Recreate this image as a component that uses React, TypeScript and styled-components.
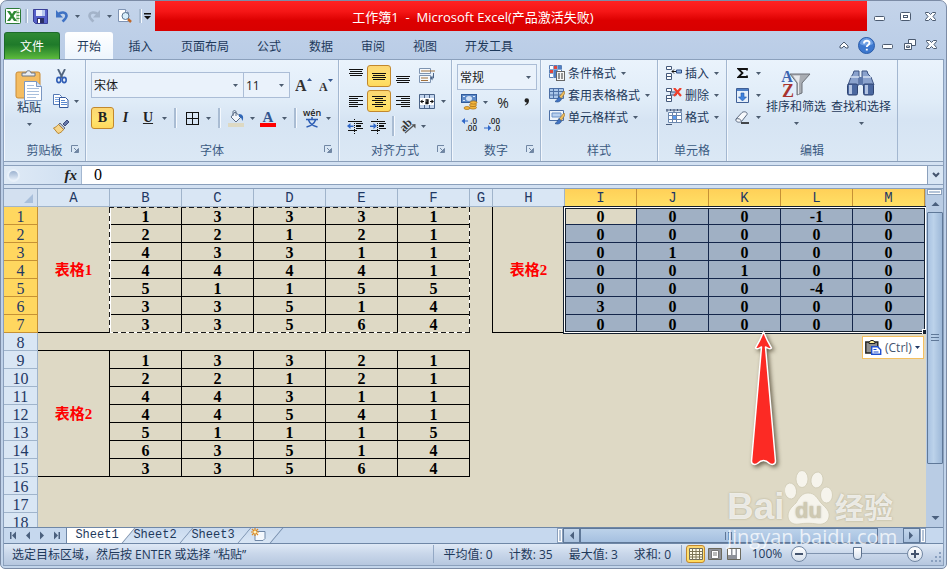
import React from "react";
import styled, { createGlobalStyle, css } from "styled-components";

const GlobalStyle = createGlobalStyle`
  * { box-sizing: border-box; }
  body {
    margin: 0;
    background: #ffffff;
    font-family: "Open Sans", "Noto Sans CJK SC", sans-serif;
    font-size: 12px;
    color: #1e395b;
  }
  button, input, select { font: inherit; color: inherit; margin: 0; }
`;

/* ---------- window frame ---------- */

const Window = styled.div`
  position: relative;
  display: flex;
  flex-direction: column;
  height: 100vh;
  padding: 0 2px 2px;
  border: 1px solid #7c8ca6;
  border-radius: 7px 7px 5px 5px;
  background: linear-gradient(#c4d4ea, #b9cce6 60px, #c3d5eb);
  overflow: hidden;
`;

const TitleBar = styled.header`
  display: flex;
  height: 30px;
  flex: none;
`;

const QuickAccess = styled.div`
  display: flex;
  align-items: center;
  width: 152px;
  padding: 0 0 0 1px;
`;

const Banner = styled.h1`
  flex: 1;
  margin: 0;
  padding-right: 76px;
  display: flex;
  align-items: center;
  justify-content: center;
  background: linear-gradient(#ff2222, #f51616 35%, #dc0000 65%, #d80000);
  color: #ffffff;
  font-size: 13px;
  font-weight: 400;
  white-space: pre;
`;

const WindowButtons = styled.div`
  display: flex;
  align-items: center;
  justify-content: space-between;
  width: 77px;
  padding: 2px 6px 0 6px;
`;

const IconButton = styled.button<{ $w?: number; $h?: number; $on?: boolean }>`
  display: inline-flex;
  align-items: center;
  justify-content: center;
  flex: none;
  width: ${(p) => p.$w ?? 22}px;
  height: ${(p) => p.$h ?? 22}px;
  padding: 0;
  border: 1px solid ${(p) => (p.$on ? "#c2882d" : "transparent")};
  border-radius: 3px;
  background: ${(p) => (p.$on ? "linear-gradient(#fcd673, #ffe36f 60%, #ffd95c)" : "none")};
`;

const TabRow = styled.nav`
  display: flex;
  align-items: flex-end;
  flex: none;
  height: 28px;
  padding: 0 3px 0 1px;
`;

const FileTab = styled.button`
  width: 56px;
  height: 27px;
  margin-right: 5px;
  padding: 0;
  border: 1px solid #1c6b2a;
  border-bottom: 0;
  border-radius: 3px 3px 0 0;
  background: linear-gradient(#2f8a34, #1f7a2a 45%, #3f9c34 75%, #5dbb3c);
  color: #ffffff;
`;

const RibbonTab = styled.button<{ $active?: boolean; $w: number }>`
  width: ${(p) => p.$w}px;
  height: 27px;
  padding: 0;
  border: 0;
  border-radius: 3px 3px 0 0;
  background: ${(p) => (p.$active ? "linear-gradient(#ffffff, #edf5fd)" : "none")};
`;

const TabTools = styled.div`
  display: flex;
  align-items: center;
  gap: 3px;
  height: 28px;
  margin-left: auto;
`;

const Body = styled.main`
  display: flex;
  flex-direction: column;
  flex: 1;
  min-height: 0;
  border: 1px solid #8ba0bc;
  background: #d3e1f2;
`;

/* ---------- ribbon ---------- */

const Ribbon = styled.section`
  display: flex;
  flex: none;
  border-bottom: 1px solid #8b9fb9;
  background: linear-gradient(#eaf3fc, #e0ecf8 40%, #d6e4f3 60%, #dbe8f5);
`;

const GroupBox = styled.section<{ $w: number }>`
  display: flex;
  flex-direction: column;
  flex: none;
  width: ${(p) => p.$w}px;
  border-right: 1px solid #a3b7d0;
  box-shadow: inset 1px 0 0 #f2f7fd;
`;

const GroupBody = styled.div<{ $top: number; $left?: number }>`
  display: flex;
  height: 79px;
  padding: ${(p) => p.$top}px 0 0 ${(p) => p.$left ?? 5}px;
`;

const GroupFooter = styled.footer`
  display: flex;
  align-items: center;
  height: 22px;
  padding: 0 4px 0 14px;
  color: #3b5a82;
  span { flex: 1; text-align: center; }
`;

const Launcher = styled.button`
  width: 10px;
  height: 10px;
  padding: 0;
  border: 0;
  background: none;
  display: flex;
`;

const Stack = styled.div<{ $gap?: number }>`
  display: flex;
  flex-direction: column;
  gap: ${(p) => p.$gap ?? 0}px;
`;

const ToolRow = styled.div`
  display: flex;
  align-items: center;
`;

const ArrowButton = styled.button<{ $w?: number }>`
  display: inline-flex;
  align-items: center;
  justify-content: center;
  flex: none;
  width: ${(p) => p.$w ?? 10}px;
  height: 16px;
  padding: 0;
  border: 0;
  background: none;
`;

const Separator = styled.span<{ $w?: number; $h?: number }>`
  display: flex;
  justify-content: center;
  flex: none;
  width: ${(p) => p.$w ?? 12}px;
  height: ${(p) => p.$h ?? 20}px;
  &::before {
    content: "";
    width: 2px;
    background: #a9bcd3;
    border-right: 1px solid #f5f9fe;
  }
`;

const BigButton = styled.button<{ $w: number }>`
  display: flex;
  flex-direction: column;
  align-items: center;
  width: ${(p) => p.$w}px;
  padding: 0;
  border: 0;
  background: none;
  white-space: nowrap;
  line-height: 18px;
  svg:last-child { margin-top: 6px; }
`;

const Picture = styled.span<{ $h: number }>`
  display: flex;
  align-items: center;
  height: ${(p) => p.$h}px;
`;

const LabelButton = styled.button`
  display: flex;
  align-items: center;
  height: 22px;
  padding: 0;
  border: 0;
  background: none;
  white-space: nowrap;
  span { margin: 0 5px 0 3px; }
`;

const ComboBox = styled.label<{ $w: number }>`
  display: flex;
  align-items: center;
  width: ${(p) => p.$w}px;
  height: 26px;
  padding-right: 5px;
  border: 1px solid #abbdd6;
  background: #eaf2fb;
  & + & { border-left: 0; }
  select {
    flex: 1;
    min-width: 0;
    height: 22px;
    padding: 0 2px;
    border: 0;
    background: none;
    appearance: none;
    color: #1c1c1c;
  }
`;

const Letter = styled.span<{ $size: number; $italic?: boolean; $underline?: boolean }>`
  font: bold ${(p) => p.$size}px "Liberation Serif", serif;
  font-style: ${(p) => (p.$italic ? "italic" : "normal")};
  text-decoration: ${(p) => (p.$underline ? "underline" : "none")};
  color: #222222;
`;

const Percent = styled.span`
  font-size: 14px;
  color: #222222;
`;

/* ---------- formula bar ---------- */

const FormulaBar = styled.div`
  display: flex;
  flex: none;
  height: 20px;
  margin-top: 3px;
  border: solid #8ba0bc;
  border-width: 1px 0;
  background: #ffffff;
`;

const NameArea = styled.div`
  display: flex;
  align-items: center;
  justify-content: space-between;
  width: 78px;
  padding: 0 4px 0 3px;
  border-right: 1px solid #a3b7d0;
  background: linear-gradient(90deg, #dfeaf6, #cfdff1);
`;

const Knob = styled.span`
  width: 13px;
  height: 13px;
  border-radius: 50%;
  border: 2px solid #e8f0f9;
  background: linear-gradient(#9db3d0, #e4edf8);
`;

const FormulaInput = styled.input`
  flex: 1;
  min-width: 0;
  padding: 0 12px;
  border: 0;
  background: #ffffff;
  color: #000000;
  && { font: 16px "Liberation Serif", serif; }
`;

const ExpandButton = styled.button`
  width: 16px;
  padding: 0;
  border: 0;
  border-left: 1px solid #8ba0bc;
  background: #d9e6f4;
  display: flex;
  align-items: center;
  justify-content: center;
`;

/* ---------- worksheet ---------- */

const Workspace = styled.div`
  display: flex;
  flex: 1;
  min-height: 0;
  margin-top: 3px;
  border-top: 1px solid #8ba0bc;
`;

const Sheet = styled.div`
  position: relative;
  flex: 1;
  min-width: 0;
  overflow: hidden;
  background: #ded9c5;
`;

const Grid = styled.table`
  width: 100%;
  table-layout: fixed;
  border-collapse: separate;
  border-spacing: 0;
`;

const Col = styled.col<{ $w?: number }>`
  width: ${(p) => (p.$w ? `${p.$w}px` : "auto")};
`;

const heading = css<{ $hot?: boolean }>`
  height: 18px;
  padding: 2px 0 0;
  border: solid ${(p) => (p.$hot ? "#c69135" : "#a0b4cb")};
  border-width: 0 1px 1px 0;
  color: #1f3864;
  font-weight: 400;
  line-height: 15px;
`;

const ColumnHead = styled.th<{ $hot?: boolean }>`
  ${heading}
  font-family: "Liberation Mono", monospace;
  font-size: 14px;
  background: ${(p) => (p.$hot ? "linear-gradient(#ffd058, #ffe066)" : "#d9e6f4")};
`;

const RowHead = styled.th<{ $hot?: boolean }>`
  ${heading}
  font-family: "Liberation Serif", serif;
  font-size: 16px;
  background: ${(p) => (p.$hot ? "#ffd75f" : "#d9e6f4")};
`;

const Corner = styled.th`
  ${heading}
  background: #d3e0f0;
  svg { display: block; margin-left: auto; margin-right: 4px; }
`;

type CellLook = { $right?: boolean; $bottom?: boolean; $picked?: boolean; $blue?: boolean };

const Cell = styled.td<CellLook>`
  height: 18px;
  padding: 2px 0 0;
  border: 0 solid ${(p) => (p.$blue ? "#14264a" : "#000000")};
  border-right-width: ${(p) => (p.$right ? 1 : 0)}px;
  border-bottom-width: ${(p) => (p.$bottom ? 1 : 0)}px;
  background: ${(p) => (p.$picked ? "#a0b0c4" : "transparent")};
  color: #000000;
  font: bold 16px/15px "Liberation Serif", serif;
  text-align: center;
`;

const TitleCell = styled(Cell)`
  color: #ff0000;
  font: bold 15px/17px "Liberation Serif", "Noto Sans CJK SC", serif;
`;

const CopyMarquee = styled.svg`
  position: absolute;
  left: 105px;
  top: 17px;
  width: 362px;
  height: 128px;
`;

const SelectionFrame = styled.div`
  position: absolute;
  left: 559px;
  top: 17px;
  width: 364px;
  height: 128px;
  border: 1px solid #14202f;
  &::before {
    content: "";
    position: absolute;
    inset: 0;
    border: 1px solid #ffffff;
  }
  &::after {
    content: "";
    position: absolute;
    inset: 1px;
    border: 1px solid #14202f;
  }
`;

const FillHandle = styled.span`
  position: absolute;
  right: -1px;
  bottom: -1px;
  z-index: 1;
  width: 5px;
  height: 5px;
  border: solid #ffffff;
  border-width: 1px 0 0 1px;
  background: #14202f;
`;

const Pointer = styled.svg`
  position: absolute;
  left: 742px;
  top: 139px;
  filter: drop-shadow(2px 2px 2px rgba(60, 50, 30, 0.7));
`;

const PasteOptions = styled.button`
  position: absolute;
  left: 858px;
  top: 147px;
  display: flex;
  align-items: center;
  gap: 3px;
  width: 62px;
  height: 23px;
  padding: 0 2px;
  border: 1px solid #f5c060;
  background: #ffffff;
  color: #44546e;
`;

/* ---------- scroll bars ---------- */

const VScroll = styled.div`
  display: flex;
  flex-direction: column;
  flex: none;
  width: 17px;
  padding-left: 1px;
  background: #b9cce4;
`;

const SplitBox = styled.span<{ $vertical?: boolean }>`
  flex: none;
  width: ${(p) => (p.$vertical ? 6 : 15)}px;
  height: ${(p) => (p.$vertical ? 15 : 6)}px;
  border: 1px solid #8ba0bc;
  background: #f3f8fd;
  box-shadow: inset 0 0 0 1px #ffffff, inset 0 0 0 2px #b4c4d8;
`;

const ScrollArrow = styled.button<{ $w?: number; $h?: number; $boxed?: boolean }>`
  display: flex;
  align-items: center;
  justify-content: center;
  flex: none;
  width: ${(p) => p.$w ?? 16}px;
  height: ${(p) => p.$h ?? 16}px;
  padding: 0;
  border: ${(p) => (p.$boxed ? "1px solid #5f7898" : "0")};
  background: ${(p) => (p.$boxed ? "linear-gradient(#c3d6ec, #a9c1de)" : "none")};
`;

const VThumb = styled.span`
  display: flex;
  align-items: center;
  justify-content: center;
  flex: 252 1 0;
  border: 1px solid #5f7898;
  border-radius: 1px;
  background: linear-gradient(90deg, #a9c3e2, #bcd2ea 40%, #9db8d8);
`;

const VTrack = styled.span`
  flex: 46 1 0;
`;

/* ---------- sheet tabs ---------- */

const BottomRow = styled.div`
  display: flex;
  flex: none;
  height: 17px;
  border: solid #6f87a6;
  border-width: 1px 0;
  background: #c6d8ee;
`;

const SheetNav = styled.div`
  position: relative;
  z-index: 2;
  display: flex;
  align-items: center;
  justify-content: space-around;
  width: 63px;
  padding: 0 2px;
  border-right: 1px solid #6f87a6;
  background: #c6d8ee;
`;

const NavButton = styled.button`
  display: flex;
  padding: 0;
  border: 0;
  background: none;
`;

const SheetTab = styled.button<{ $active?: boolean; $w: number }>`
  position: relative;
  z-index: ${(p) => (p.$active ? 1 : 0)};
  width: ${(p) => p.$w}px;
  padding: 0 ${(p) => (p.$active ? 2 : 6)}px 0 0;
  border: 0;
  background: none;
  && { font: 12px/15px "Liberation Mono", monospace; }
  &::before {
    content: "";
    position: absolute;
    z-index: -1;
    top: 0;
    bottom: 0;
    right: 0;
    left: ${(p) => (p.$active ? -10 : 0)}px;
    border-right: 1px solid #6f87a6;
    background: ${(p) => (p.$active ? "#ffffff" : "linear-gradient(#c9daef, #d9e6f5)")};
    transform: skewX(-40deg);
  }
`;

const HScroll = styled.div`
  display: flex;
  flex: none;
  width: 369px;
  margin-left: auto;
`;

const HThumb = styled.span`
  display: flex;
  align-items: center;
  justify-content: center;
  flex: 298 1 0;
  border: 1px solid #5f7898;
  background: linear-gradient(#bcd2ea, #a5c0e0);
`;

const HTrack = styled.span`
  flex: 25 1 0;
  background: #b4c8e2;
`;

const SizeCorner = styled.span`
  flex: none;
  width: 17px;
`;

/* ---------- status bar ---------- */

const StatusBar = styled.footer`
  display: flex;
  align-items: center;
  flex: none;
  height: 21px;
  padding: 0 1px 2px 8px;
  background: linear-gradient(#dfe9f6, #c9d7ea 45%, #b6c7df);
  white-space: pre;
`;

const Stats = styled.div`
  display: flex;
  gap: 16px;
  margin: 0 4px 0 auto;
  padding: 0 10px;
  border: solid #93a8c4;
  border-width: 0 1px;
`;

const RoundButton = styled.button`
  display: flex;
  align-items: center;
  justify-content: center;
  flex: none;
  width: 16px;
  height: 16px;
  padding: 0;
  border: 1px solid #7287a3;
  border-radius: 50%;
  background: linear-gradient(#ffffff, #d5dfec);
`;

const ZoomText = styled.button`
  width: 48px;
  padding: 0;
  border: 0;
  background: none;
`;

const ZoomSlider = styled.input`
  width: 100px;
  height: 15px;
  appearance: none;
  background: linear-gradient(#7f93ae, #7f93ae) center / 100% 1px no-repeat;
  &::-webkit-slider-thumb {
    appearance: none;
    width: 9px;
    height: 13px;
    background: linear-gradient(#ffffff, #d8e2ef);
    border: 1px solid #5d728e;
    border-radius: 1px 1px 5px 5px;
  }
`;

const Grip = styled.svg`
  flex: none;
  align-self: flex-end;
  margin-left: 8px;
`;

/* ---------- watermark ---------- */

const Watermark = styled.div`
  position: absolute;
  right: 50px;
  bottom: 19px;
  width: 169px;
  color: rgba(255, 255, 255, 0.75);
  pointer-events: none;
`;

const WatermarkLogo = styled.div`
  display: flex;
  align-items: flex-end;
  height: 56px;
  font-weight: 700;
  text-shadow: 0 0 2px rgba(150, 145, 120, 0.7);
`;

const Bai = styled.span`
  width: 58px;
  font: bold 37px/36px "Liberation Sans", sans-serif;
`;

const JingYan = styled.span`
  font-size: 29px;
  line-height: 34px;
`;

const WatermarkUrl = styled.div`
  font-size: 20px;
  line-height: 24px;
`;

/* ---------- icons ---------- */

const Down = ({ color = "#4c5c70" }: { color?: string }) => (
  <svg width="5" height="3" viewBox="0 0 5 3"><path d="M0 0h5L2.5 3z" fill={color} /></svg>
);

const Lines = ({ rows, h = 14 }: { rows: [number, number][]; h?: number }) => (
  <svg width="14" height={h} viewBox={`0 0 14 ${h}`} shapeRendering="crispEdges">
    {rows.map(([x, w], i) => (
      <rect key={i} x={x} y={i * 2} width={w} height="1" fill="#111" />
    ))}
  </svg>
);

const AlignV = ({ y }: { y: number }) => (
  <svg width="14" height="20" viewBox="0 0 14 20" shapeRendering="crispEdges">
    <path d={`M0 ${y}h14v1H0zM1 ${y + 2}h12v1H1zM0 ${y + 4}h14v1H0zM1 ${y + 6}h12v1H1z`} fill="#111" />
  </svg>
);

const ExcelLogo = () => (
  <svg width="16" height="16" viewBox="0 0 16 16">
    <rect x=".5" y=".5" width="15" height="15" rx="1" fill="#fff" stroke="#2c7a38" />
    <path d="M11 2h3v12h-3z" fill="#cfe6c8" />
    <path d="M11.5 4.5h3M11.5 7.5h3M11.5 10.5h3" stroke="#4c9a4c" />
    <path d="M2 3h3l2 3 2-3h3L8.500 8l3.500 5H9L7 10l-2 3H2l3.500-5z" fill="#2f8a34" />
  </svg>
);

const SaveIcon = () => (
  <svg width="15" height="15" viewBox="0 0 15 15">
    <path d="M.5.5h14v14h-12l-2-2z" fill="#5560c8" stroke="#3a3f98" />
    <rect x="3" y="1" width="9" height="6" fill="#e9eefb" />
    <path d="M9 1h3v6H9z" fill="#b7c8ee" />
    <rect x="4" y="9" width="7" height="5" fill="#2b2f66" />
    <rect x="5" y="10" width="2" height="4" fill="#fff" />
  </svg>
);

const UndoIcon = ({ redo }: { redo?: boolean }) => (
  <svg width="14" height="13" viewBox="0 0 14 13">
    <g transform={redo ? "translate(14 0) scale(-1 1)" : undefined}>
      <path d="M3 4.500C6 1.500 11 2 11.500 5.500c.3 2.500-2 4-4 6" fill="none" stroke={redo ? "#a3b3c9" : "#3f72c4"} strokeWidth="2.600" />
      <path d="M1 0l0 7.500h7z" fill={redo ? "#a3b3c9" : "#3f72c4"} />
    </g>
  </svg>
);

const PreviewIcon = () => (
  <svg width="16" height="16" viewBox="0 0 16 16">
    <path d="M1.500 1.500h7l3 3v9h-10z" fill="#fff" stroke="#7f94b4" />
    <path d="M8.500 1.500v3h3" fill="#d6e2f2" stroke="#7f94b4" />
    <circle cx="8.500" cy="8" r="3.500" fill="#d8eefb" stroke="#5b7590" />
    <path d="M11 11l3 3" stroke="#c06a2c" strokeWidth="2.500" />
  </svg>
);

const CustomizeIcon = () => (
  <svg width="7" height="7" viewBox="0 0 7 7"><path d="M0 0h7v1.500H0zM0 3h7L3.500 6.500z" fill="#111" /></svg>
);

const stroke = { fill: "#fdfeff", stroke: "#4b5a70", strokeWidth: 1 };
const MinIcon = () => (
  <svg width="12" height="12" viewBox="0 0 12 12"><rect x=".5" y="5.500" width="10" height="4" rx="1" {...stroke} /></svg>
);
const MaxIcon = () => (
  <svg width="12" height="12" viewBox="0 0 12 12">
    <rect x=".5" y="1.500" width="10" height="8" rx="1" {...stroke} />
    <rect x="3.500" y="4.500" width="4" height="2" {...stroke} />
  </svg>
);
const RestoreIcon = () => (
  <svg width="13" height="12" viewBox="0 0 13 12">
    <path d="M4.500.5h7v6h-7z" {...stroke} />
    <path d="M.5 4.500h7v6h-7z" {...stroke} />
    <path d="M2.500 7h3v1.500h-3z" {...stroke} />
  </svg>
);
const CloseIcon = () => (
  <svg width="12" height="12" viewBox="0 0 12 12">
    <path d="M.5 1.500h3l2 2 2-2h3v1L8 5.500l2.500 3v1h-3l-2-2-2 2h-3v-1L3 5.500l-2.500-3z" {...stroke} />
  </svg>
);
const CollapseIcon = () => (
  <svg width="10" height="9" viewBox="0 0 10 9">
    <path d="M5 1L9 5v2H7L5 5 3 7H1V5z" {...stroke} />
  </svg>
);
const HelpIcon = () => (
  <svg width="17" height="17" viewBox="0 0 17 17">
    <circle cx="8.500" cy="8.500" r="8" fill="#3d78cf" stroke="#2b5ca8" />
    <path d="M2 7a6.500 6 0 0 1 13 0c-4 2-9 2-13 0z" fill="#6fa0e4" />
    <path d="M6 6.500c0-3.500 5.500-3.500 5.500-.5 0 2-2.700 2-2.700 4M8.800 11.800v1.800" fill="none" stroke="#fff" strokeWidth="1.900" />
  </svg>
);

const PasteIcon = () => (
  <svg width="28" height="31" viewBox="0 0 28 31">
    <rect x="1" y="2" width="24" height="26" rx="2" fill="#f4bd62" stroke="#c98b36" />
    <path d="M7 6V3h4c0-3 5-3 5 0h4v3z" fill="#e8ecf2" stroke="#6c7684" />
    <path d="M9.500 11.500h12l5 5v14h-17z" fill="#fff" stroke="#7b97c2" />
    <path d="M21.500 11.500v5h5" fill="#d5e2f4" stroke="#7b97c2" />
    <path d="M12 15.500h7M12 18.500h12M12 21.500h12M12 24.500h12M12 27.500h9" stroke="#a9bfdc" />
  </svg>
);
const CutIcon = () => (
  <svg width="11" height="15" viewBox="0 0 11 15">
    <path d="M2 0l4.500 9M9 0L4.500 9" stroke="#51657f" strokeWidth="1.800" />
    <ellipse cx="2.800" cy="11" rx="2" ry="2.600" fill="none" stroke="#2f5db5" strokeWidth="1.600" />
    <ellipse cx="8.200" cy="11" rx="2" ry="2.600" fill="none" stroke="#2f5db5" strokeWidth="1.600" />
  </svg>
);
const CopyIcon = () => (
  <svg width="16" height="14" viewBox="0 0 16 14">
    <path d="M.5.5h6l2 2v8h-8z" fill="#fff" stroke="#5378b5" />
    <path d="M2 3.500h4M2 5.500h4M2 7.500h4" stroke="#7da3dc" />
    <path d="M6.500 3.500h6l2.500 2.500v7.500H6.500z" fill="#fff" stroke="#33589c" />
    <path d="M8 6.500h4M8 8.500h6M8 10.500h6" stroke="#5c8ad0" />
  </svg>
);
const BrushIcon = () => (
  <svg width="17" height="15" viewBox="0 0 17 15">
    <path d="M10 5l4-4 2 2-4 4z" fill="#6678a8" stroke="#3e4c7c" />
    <path d="M7 4l5 5-2 2-5-5z" fill="#b9bfcc" stroke="#6b7080" />
    <path d="M5.500 5.500l5 5C9 13 7 14 5 14.500L.5 9C2.500 8.500 4 7 5.500 5.500z" fill="#f6d58b" stroke="#b8862f" />
  </svg>
);
const LauncherIcon = () => (
  <svg width="8" height="8" viewBox="0 0 8 8">
    <path d="M.5 7V.5H7" fill="none" stroke="#7187a4" />
    <path d="M3 3l3 3M7.500 3.500v4h-4z" stroke="#7187a4" fill="#7187a4" />
  </svg>
);
const BorderIcon = () => (
  <svg width="13" height="13" viewBox="0 0 13 13" shapeRendering="crispEdges">
    <path d="M.5.500h12v12H.5zM6.500 0v13M0 6.500h13" fill="none" stroke="#111" />
  </svg>
);
const FillIcon = () => (
  <svg width="16" height="17" viewBox="0 0 16 17">
    <path d="M7 2l6 5-5 5-5-5z" fill="#f3f7fc" stroke="#5a6c85" />
    <path d="M5 6V2c0-2 3-2 3 0v4" fill="none" stroke="#5a6c85" />
    <path d="M11 4c4 0 5 3 3.500 7-1-2-1-4-3.500-4z" fill="#2f67b8" />
    <rect y="13" width="16" height="4" fill="#ddd9c3" />
  </svg>
);
const FontColorIcon = () => (
  <svg width="16" height="18" viewBox="0 0 16 18">
    <text x="8" y="13" textAnchor="middle" fontFamily="Liberation Serif" fontWeight="700" fontSize="15" fill="#34568f">A</text>
    <rect y="14" width="16" height="4" fill="#ff0000" />
  </svg>
);
const PhoneticIcon = () => (
  <svg width="20" height="20" viewBox="0 0 20 20">
    <text x="10" y="8" textAnchor="middle" fontFamily="Open Sans" fontWeight="600" fontSize="9" fill="#222">wén</text>
    <path d="M10 9v2M4 11.500h12M6.500 12c1 3 5 6 9 7M13.500 12c-1 3-5 6-9 7" fill="none" stroke="#2f5fb5" strokeWidth="1.500" />
  </svg>
);
const GrowIcon = ({ shrink }: { shrink?: boolean }) => (
  <svg width="17" height="20" viewBox="0 0 17 20">
    <text x="0" y="16" fontFamily="Liberation Serif" fontWeight="700" fontSize={shrink ? 12 : 16} fill="#333">A</text>
    <path d={shrink ? "M9 4h5l-2.500 3z" : "M12 6h5l-2.500-3z"} fill="#34568f" />
  </svg>
);
const WrapIcon = () => (
  <svg width="17" height="16" viewBox="0 0 17 16">
    <path d="M.5.5h11v5H.5zM.5 7.500h11v7H.5z" fill="#f5f8fc" stroke="#7d93b0" />
    <path d="M2 3h14M2 10h7M2 12.500h7" stroke="#a0703c" strokeWidth="1.200" />
    <path d="M14.500 5v5h-2" fill="none" stroke="#4b6488" />
    <path d="M13.500 7.500v5L11 10z" fill="#4b6488" />
  </svg>
);
const MergeIcon = () => (
  <svg width="16" height="15" viewBox="0 0 16 15">
    <path d="M.5.5h15v14H.5z" fill="#c3d5ee" stroke="#4b6488" />
    <path d="M5.500 0v4M10.500 0v4M5.500 11v4M10.500 11v4" stroke="#4b6488" />
    <path d="M1 4h14v7H1z" fill="#fff" />
    <path d="M6.500 6h2.500v4M9 8H7v1.500h2" fill="none" stroke="#111" strokeWidth="1.300" />
    <path d="M2 7.500h3M11 7.500h3" stroke="#111" />
    <path d="M1 7.500l2.500-2v4zM15 7.500l-2.500-2v4z" fill="#111" />
  </svg>
);
const IndentIcon = ({ inc }: { inc?: boolean }) => (
  <svg width="17" height="15" viewBox="0 0 17 15">
    <g shapeRendering="crispEdges">
      <path d="M1 2.500h14M9 4.500h7M9 7h4M9 9.500h7M1 11.500h9" stroke="#111" />
      <path d="M9 7h5" stroke="#111" strokeWidth="2" />
      <path d="M7.500 0v15" stroke="#111" strokeDasharray="1 1" />
    </g>
    <path d={inc ? "M0 6.500h3.500V4L7 7l-3.500 3V8H0z" : "M6.500 6.500H3.500V4L0 7l3.500 3V8h3z"} fill="#2f67c8" />
  </svg>
);
const OrientIcon = () => (
  <svg width="18" height="18" viewBox="0 0 18 18">
    <text x="1" y="12" transform="rotate(-45 7 9)" fontFamily="Liberation Serif" fontWeight="700" fontSize="12" fill="#333">ab</text>
    <path d="M6 16l8-7" stroke="#555" strokeWidth="1.200" />
    <path d="M16.500 7v4.500l-4-4z" fill="#555" />
  </svg>
);
const CurrencyIcon = () => (
  <svg width="17" height="16" viewBox="0 0 17 16">
    <rect x=".5" y=".5" width="15" height="8" fill="#5d8ac8" stroke="#2f5a9c" />
    <ellipse cx="8" cy="4.500" rx="3" ry="2.500" fill="#cfe0f5" />
    <path d="M2 2.500h2M12 2.500h2M2 6.500h2" stroke="#dbe8f8" />
    <g fill="#f3b53c" stroke="#a86e12" strokeWidth=".7">
      <ellipse cx="12" cy="13.500" rx="3.500" ry="1.600" /><ellipse cx="12" cy="11" rx="3.500" ry="1.600" />
      <ellipse cx="12.500" cy="8.500" rx="3.500" ry="1.600" /><ellipse cx="6" cy="14" rx="3" ry="1.500" />
    </g>
  </svg>
);
const CommaIcon = () => (
  <svg width="6" height="8" viewBox="0 0 6 8">
    <path d="M.5 2.500a2 2 0 0 1 4.500 0C5 5 3.500 7 1 7.500L.8 7C2.300 6 2.700 5.200 2.700 4.500 1.500 4.600.5 3.700.5 2.500z" fill="#222" />
  </svg>
);
const DecimalIcon = ({ less }: { less?: boolean }) => (
  <svg width="17" height="18" viewBox="0 0 17 18">
    <text x="16" y="8" textAnchor="end" fontFamily="Open Sans" fontWeight="600" fontSize="8" fill="#222">{less ? ".00" : ".0"}</text>
    <text x="16" y="15" textAnchor="end" fontFamily="Open Sans" fontWeight="600" fontSize="8" fill="#222">{less ? ".0" : ".00"}</text>
    <path d={less ? "M0 11.500h4V9l3.500 3L4 15v-2.500H0z" : "M7 4.500H4V2L.5 5 4 8V5.500h3z"} fill="#2f67c8" />
  </svg>
);
const CondFormatIcon = () => (
  <svg width="16" height="16" viewBox="0 0 16 16">
    <path d="M.5.500h12v12H.5z" fill="#fff" stroke="#5b7fb4" />
    <path d="M4.500 0v13M8.500 0v13M0 4.500h13M0 8.500h13" stroke="#8ba9d2" />
    <path d="M5 1h3v3H5zM1 5h3v3H1z" fill="#e2453a" /><path d="M5 5h3v7H5zM9 1h3v3H9z" fill="#4d7fc6" />
    <rect x="7.500" y="6.500" width="8" height="9" fill="#f5f5f5" stroke="#666" />
    <path d="M9 9h2M12 9h2M9 11h2M12 11h2M9 13h2M12 13h2" stroke="#333" />
  </svg>
);
const TableFormatIcon = ({ single }: { single?: boolean }) => (
  <svg width="16" height="16" viewBox="0 0 16 16">
    <path d="M.5 1.500h14v10H.5z" fill={single ? "#eef4fb" : "#a9c6ea"} stroke="#4c6fa5" />
    {single ? <path d="M3 4h9v4H3z" fill="#b8d0ef" stroke="#6d93c9" /> : <path d="M0 4.500h15M0 8h15M4.500 1v11M9.500 1v11" stroke="#4c6fa5" />}
    <path d="M15 4l-5 6 2 2 4-6z" fill="#f0c060" stroke="#9c7430" strokeWidth=".7" />
    <path d="M10 9.500l2.500 2.500c-1 3-4 3.500-6.500 2.500 2-1 2.500-3 4-5z" fill="#3f72c4" stroke="#27518f" strokeWidth=".7" />
  </svg>
);
const InsertCellIcon = ({ del }: { del?: boolean }) => (
  <svg width="16" height="14" viewBox="0 0 16 14">
    <path d="M.5.500h5v3h-5zM.5 10.500h5v3h-5zM.5 7.500h5v3h-5z" fill="#fff" stroke="#44597a" />
    {del ? (
      <g>
        <path d="M4.500 4h6v3h-6z" fill="#b9d0ee" stroke="#44597a" />
        <path d="M8 0l7 8M15 0L8 8" stroke="#f0402c" strokeWidth="2.200" />
      </g>
    ) : (
      <g>
        <path d="M10.500 4h5v3h-5z" fill="#8fb3e2" stroke="#2f4f86" />
        <path d="M10 5.500H6M8 3.500l-2 2 2 2" fill="none" stroke="#111" />
      </g>
    )}
  </svg>
);
const FormatCellIcon = () => (
  <svg width="16" height="16" viewBox="0 0 16 16">
    <path d="M2.500 3.500h13v10h-13z" fill="#fff" stroke="#6a86ad" />
    <path d="M2 6.500h14M2 10.500h14M6.500 3v11M10.500 3v11" stroke="#6a86ad" />
    <path d="M7 7h3v3H7z" fill="#5b9bf0" />
    <path d="M1 0v3M4.500 0v2M8 0v3M11.500 0v2M15 0v3M0 1h16M0 15.500h6" stroke="#44597a" />
  </svg>
);
const SigmaIcon = () => (
  <svg width="11" height="10" viewBox="0 0 11 10">
    <path d="M10 2.500V1H1.500L5.500 5l-4 4H10V7.500" fill="none" stroke="#111" strokeWidth="1.800" />
  </svg>
);
const FillDownIcon = () => (
  <svg width="13" height="15" viewBox="0 0 13 15">
    <path d="M.5.500h12v14H.5z" fill="#e6f0fb" stroke="#3f5f96" />
    <path d="M1 1h11v2H1z" fill="#4d7fc6" />
    <path d="M5 5h3v4h2.500l-4 4-4-4H5z" fill="#3f83e0" stroke="#2558a6" strokeWidth=".6" />
  </svg>
);
const EraserIcon = () => (
  <svg width="14" height="13" viewBox="0 0 14 13">
    <path d="M1 8l6-6.500c2-1.500 6-.5 5 2L6.500 10.500C4 12 0 11 1 8z" fill="#f6f8fb" stroke="#5d6b80" />
    <path d="M1 8c2-1 5 0 5.500 2.500" fill="none" stroke="#5d6b80" />
    <path d="M6 12h8" stroke="#111" strokeWidth="1.500" />
  </svg>
);
const SortIcon = () => (
  <svg width="32" height="32" viewBox="0 0 32 32">
    <path d="M10 7h20l-8 9v10l-5 2V16z" fill="#a9adb3" stroke="#6c7178" />
    <path d="M13 8.500h7l-1 7.500v11l-1 .5V16z" fill="#e7e9ec" />
    <text x="7" y="15" textAnchor="middle" fontFamily="Liberation Serif" fontWeight="700" fontSize="16" fill="#3c64b0">A</text>
    <text x="8" y="30" textAnchor="middle" fontFamily="Liberation Serif" fontWeight="700" fontSize="18" fill="#a8332f">Z</text>
  </svg>
);
const FindIcon = () => (
  <svg width="28" height="26" viewBox="0 0 28 26">
    {[0, 15].map((x) => (
      <g key={x} transform={`translate(${x} 0)`}>
        <path d={x ? "M0 1h5l1 3 3 3 3 8H0z" : "M12 1H7L6 4 4 7 1 15h11z"} fill="#8aa2cd" stroke="#3e5482" />
        <rect x={x ? 1.5 : .5} y="14" width="10" height="11" rx="1.500" fill="#4a679f" stroke="#2f4472" />
        <rect x={x ? 3 : 2} y="15" width="3" height="9" fill="#b3c4e2" />
        <path d={x ? "M1 7h8" : "M3 7h9"} stroke="#d5e0f2" strokeWidth="1.500" />
      </g>
    ))}
    <rect x="12" y="7" width="4" height="8" fill="#5d78ab" />
  </svg>
);
const Triangle = ({ dir, bar }: { dir: "left" | "right" | "up" | "down"; bar?: boolean }) => {
  const turn = { left: 0, up: 90, right: 180, down: 270 }[dir];
  return (
    <svg width="9" height="9" viewBox="0 0 9 9">
      <g transform={`rotate(${turn} 4.500 4.500)`} fill="#4b607e">
        <path d="M7 .5v8L3 4.500z" />
        {bar && <path d="M1 1h1.500v7H1z" />}
      </g>
    </svg>
  );
};
const GripLines = ({ vertical }: { vertical?: boolean }) => (
  <svg width="8" height="8" viewBox="0 0 8 8">
    <path d={vertical ? "M.5 0v8M3.500 0v8M6.500 0v8" : "M0 .5h8M0 3.500h8M0 6.500h8"} stroke="#5f7898" />
  </svg>
);
const NewSheetIcon = () => (
  <svg width="15" height="13" viewBox="0 0 15 13">
    <path d="M4 3.500h10v7l-2 2H4z" fill="#f4f8fd" stroke="#6f87a6" />
    <path d="M4 0v8M0 4h8M1 1l6 6M7 1L1 7" stroke="#e08a1c" strokeWidth="1.200" />
    <circle cx="4" cy="4" r="1.500" fill="#fff3c0" />
  </svg>
);
const ClipIcon = () => (
  <svg width="17" height="15" viewBox="0 0 17 15">
    <path d="M.8 2h12v11H.8z" fill="#8f8f8f" stroke="#222" strokeWidth="1.400" />
    <path d="M4 3.500V2l2-1.500h2L10 2v1.500z" fill="#ffef9a" stroke="#222" />
    <path d="M6.700 6.700h6l3 3v4.600h-9z" fill="#fff" stroke="#1f4fd0" strokeWidth="1.400" />
    <path d="M8.500 9.500h3M8.500 12h5" stroke="#1f4fd0" />
  </svg>
);
const ViewIcon = ({ kind }: { kind: "grid" | "page" | "break" }) => (
  <svg width="14" height="12" viewBox="0 0 14 12">
    <path d="M.5.500h13v11H.5z" fill={kind === "grid" ? "#fffbe6" : "#8f9299"} stroke="#6c6a5e" />
    {kind === "grid" && <path d="M0 3.500h14M0 6.500h14M0 9h14M3.500 0v12M7 0v12M10.500 0v12" stroke="#7c7455" />}
    {kind === "page" && <path d="M3.500 2.500h7v8h-7zM5 5h4M5 7h4" fill="#fff" stroke="#777" />}
    {kind === "break" && <path d="M1 1h3v6H1zM5.500 1h3v6h-3zM10 1h3v10h-3z" fill="#fff" />}
  </svg>
);

/* ---------- composed parts ---------- */

type GroupProps = { label: string; width: number; top: number; left?: number; launcher?: boolean; children: React.ReactNode };
const Group = ({ label, width, top, left, launcher, children }: GroupProps) => (
  <GroupBox $w={width} aria-label={label}>
    <GroupBody $top={top} $left={left}>{children}</GroupBody>
    <GroupFooter>
      <span>{label}</span>
      <Launcher aria-label={`${label} 选项`} disabled={!launcher}>{launcher && <LauncherIcon />}</Launcher>
    </GroupFooter>
  </GroupBox>
);

const Arrow = ({ w, label }: { w?: number; label: string }) => (
  <ArrowButton $w={w} aria-label={label}><Down /></ArrowButton>
);

const Combo = ({ value, width, label }: { value: string; width: number; label: string }) => (
  <ComboBox $w={width}>
    <select aria-label={label} defaultValue={value}><option>{value}</option></select>
    <Down />
  </ComboBox>
);

const columns = ["A", "B", "C", "D", "E", "F", "G", "H", "I", "J", "K", "L", "M"];
const table1 = ["13331", "22121", "43311", "44441", "51155", "33514", "33564"].map((r) => r.split(""));
const table2 = ["13321", "22121", "44311", "44541", "51115", "63514", "33564"].map((r) => r.split(""));
const diff = [
  [0, 0, 0, -1, 0], [0, 0, 0, 0, 0], [0, 1, 0, 0, 0], [0, 0, 1, 0, 0],
  [0, 0, 0, -4, 0], [3, 0, 0, 0, 0], [0, 0, 0, 0, 0],
];

const SheetRow = ({ n }: { n: number }) => {
  const upper = n <= 7;
  const lower = n >= 9 && n <= 15;
  const left = upper ? table1[n - 1] : lower ? table2[n - 9] : null;
  return (
    <tr>
      <RowHead scope="row" $hot={upper}>{n}</RowHead>
      {(n === 1 || n === 9) && (
        <TitleCell rowSpan={7} $right $bottom>{n === 1 ? "表格1" : "表格2"}</TitleCell>
      )}
      {!upper && !lower && <Cell $bottom={n === 8} />}
      {left
        ? left.map((v, i) => <Cell key={i} $right $bottom>{v}</Cell>)
        : [0, 1, 2, 3, 4].map((i) => <Cell key={i} $bottom={n === 8} />)}
      <Cell $right={upper} />
      {n === 1 && <TitleCell rowSpan={7} $right $bottom>表格2</TitleCell>}
      {!upper && <Cell />}
      {[0, 1, 2, 3, 4].map((i) =>
        upper ? (
          <Cell key={i} $right $bottom $blue $picked={!(n === 1 && i === 0)}>{diff[n - 1][i]}</Cell>
        ) : (
          <Cell key={i} />
        )
      )}
      <Cell />
    </tr>
  );
};

export default function App() {
  return (
    <Window>
      <GlobalStyle />
      <TitleBar>
        <QuickAccess>
          <IconButton $w={18} aria-label="Excel"><ExcelLogo /></IconButton>
          <Separator $w={8} $h={14} />
          <IconButton $w={20} aria-label="保存"><SaveIcon /></IconButton>
          <IconButton $w={24} aria-label="撤消"><UndoIcon /></IconButton>
          <Arrow w={7} label="撤消列表" />
          <IconButton $w={25} aria-label="恢复"><UndoIcon redo /></IconButton>
          <Arrow w={7} label="恢复列表" />
          <IconButton $w={24} aria-label="打印预览"><PreviewIcon /></IconButton>
          <Separator $w={6} $h={14} />
          <IconButton $w={9} aria-label="自定义快速访问工具栏"><CustomizeIcon /></IconButton>
        </QuickAccess>
        <Banner>{"工作簿1  -  Microsoft Excel(产品激活失败)"}</Banner>
        <WindowButtons>
          <IconButton $w={14} aria-label="最小化"><MinIcon /></IconButton>
          <IconButton $w={14} aria-label="最大化"><MaxIcon /></IconButton>
          <IconButton $w={14} aria-label="关闭"><CloseIcon /></IconButton>
        </WindowButtons>
      </TitleBar>

      <TabRow>
        <FileTab>文件</FileTab>
        <RibbonTab $w={48} $active>开始</RibbonTab>
        <RibbonTab $w={55}>插入</RibbonTab>
        <RibbonTab $w={74}>页面布局</RibbonTab>
        <RibbonTab $w={54}>公式</RibbonTab>
        <RibbonTab $w={50}>数据</RibbonTab>
        <RibbonTab $w={54}>审阅</RibbonTab>
        <RibbonTab $w={50}>视图</RibbonTab>
        <RibbonTab $w={78}>开发工具</RibbonTab>
        <TabTools>
          <IconButton $w={18} aria-label="功能区最小化"><CollapseIcon /></IconButton>
          <IconButton $w={20} aria-label="帮助"><HelpIcon /></IconButton>
          <IconButton $w={18} aria-label="最小化工作簿"><MinIcon /></IconButton>
          <IconButton $w={20} aria-label="还原工作簿"><RestoreIcon /></IconButton>
          <IconButton $w={18} aria-label="关闭工作簿"><CloseIcon /></IconButton>
        </TabTools>
      </TabRow>

      <Body>
        <Ribbon>
          <Group label="剪贴板" width={82} top={5} left={3} launcher>
            <BigButton $w={44}><Picture $h={34}><PasteIcon /></Picture>粘贴<Down /></BigButton>
            <Stack $gap={3}>
              <ToolRow><IconButton $w={20} aria-label="剪切"><CutIcon /></IconButton></ToolRow>
              <ToolRow><IconButton $w={20} aria-label="复制"><CopyIcon /></IconButton><Arrow label="复制选项" /></ToolRow>
              <ToolRow><IconButton $w={20} aria-label="格式刷"><BrushIcon /></IconButton></ToolRow>
            </Stack>
          </Group>

          <Group label="字体" width={253} top={12} launcher>
            <Stack $gap={9}>
              <ToolRow>
                <Combo value="宋体" width={153} label="字体" />
                <Combo value="11" width={46} label="字号" />
                <IconButton $w={26} aria-label="增大字号"><GrowIcon /></IconButton>
                <IconButton $w={22} aria-label="减小字号"><GrowIcon shrink /></IconButton>
              </ToolRow>
              <ToolRow>
                <IconButton $w={23} $on aria-label="加粗"><Letter $size={14}>B</Letter></IconButton>
                <IconButton $w={23} aria-label="倾斜"><Letter $size={14} $italic>I</Letter></IconButton>
                <IconButton aria-label="下划线"><Letter $size={14} $underline>U</Letter></IconButton>
                <Arrow label="下划线选项" /><Separator />
                <IconButton aria-label="边框"><BorderIcon /></IconButton>
                <Arrow label="边框选项" /><Separator />
                <IconButton aria-label="填充颜色"><FillIcon /></IconButton>
                <Arrow label="填充颜色选项" />
                <IconButton aria-label="字体颜色"><FontColorIcon /></IconButton>
                <Arrow label="字体颜色选项" /><Separator />
                <IconButton aria-label="拼音"><PhoneticIcon /></IconButton>
                <Arrow label="拼音选项" />
              </ToolRow>
            </Stack>
          </Group>

          <Group label="对齐方式" width={113} top={5} launcher>
            <Stack $gap={3}>
              <ToolRow>
                <IconButton $w={23} aria-label="顶端对齐"><AlignV y={3} /></IconButton>
                <IconButton $w={24} $on aria-label="垂直居中"><AlignV y={7} /></IconButton>
                <IconButton $w={23} aria-label="底端对齐"><AlignV y={10} /></IconButton>
                <IconButton $w={26} aria-label="自动换行"><WrapIcon /></IconButton>
              </ToolRow>
              <ToolRow>
                <IconButton $w={23} aria-label="左对齐"><Lines h={11} rows={[[0, 14], [0, 9], [0, 14], [0, 9], [0, 14], [0, 9]]} /></IconButton>
                <IconButton $w={24} $on aria-label="居中"><Lines h={11} rows={[[0, 14], [3, 8], [0, 14], [3, 8], [0, 14], [3, 8]]} /></IconButton>
                <IconButton $w={23} aria-label="右对齐"><Lines h={11} rows={[[0, 14], [5, 9], [0, 14], [5, 9], [0, 14], [5, 9]]} /></IconButton>
                <IconButton $w={26} aria-label="合并后居中"><MergeIcon /></IconButton>
                <Arrow w={7} label="合并选项" />
              </ToolRow>
              <ToolRow>
                <IconButton $w={23} aria-label="减少缩进量"><IndentIcon /></IconButton>
                <IconButton $w={23} aria-label="增加缩进量"><IndentIcon inc /></IconButton>
                <Separator $w={6} />
                <IconButton $w={24} aria-label="方向"><OrientIcon /></IconButton>
                <Arrow w={6} label="方向选项" />
              </ToolRow>
            </Stack>
          </Group>

          <Group label="数字" width={89} top={4} launcher>
            <Stack $gap={1}>
              <ToolRow><Combo value="常规" width={80} label="数字格式" /></ToolRow>
              <ToolRow>
                <IconButton $w={24} aria-label="会计数字格式"><CurrencyIcon /></IconButton>
                <Arrow w={8} label="货币选项" />
                <IconButton $w={28} aria-label="百分比样式"><Percent>%</Percent></IconButton>
                <IconButton $w={20} aria-label="千位分隔样式"><CommaIcon /></IconButton>
              </ToolRow>
              <ToolRow>
                <IconButton $w={24} aria-label="增加小数位数"><DecimalIcon /></IconButton>
                <IconButton $w={22} aria-label="减少小数位数"><DecimalIcon less /></IconButton>
              </ToolRow>
            </Stack>
          </Group>

          <Group label="样式" width={117} top={2} left={8}>
            <Stack>
              <LabelButton><CondFormatIcon /><span>条件格式</span><Down /></LabelButton>
              <LabelButton><TableFormatIcon /><span>套用表格格式</span><Down /></LabelButton>
              <LabelButton><TableFormatIcon single /><span>单元格样式</span><Down /></LabelButton>
            </Stack>
          </Group>

          <Group label="单元格" width={69} top={2} left={8}>
            <Stack>
              <LabelButton><InsertCellIcon /><span>插入</span><Down /></LabelButton>
              <LabelButton><InsertCellIcon del /><span>删除</span><Down /></LabelButton>
              <LabelButton><FormatCellIcon /><span>格式</span><Down /></LabelButton>
            </Stack>
          </Group>

          <Group label="编辑" width={171} top={2} left={4}>
            <Stack>
              <ToolRow><IconButton aria-label="求和"><SigmaIcon /></IconButton><Arrow label="求和选项" /></ToolRow>
              <ToolRow><IconButton aria-label="填充"><FillDownIcon /></IconButton><Arrow label="填充选项" /></ToolRow>
              <ToolRow><IconButton aria-label="清除"><EraserIcon /></IconButton><Arrow label="清除选项" /></ToolRow>
            </Stack>
            <BigButton $w={66}><Picture $h={36}><SortIcon /></Picture>排序和筛选<Down /></BigButton>
            <BigButton $w={64}><Picture $h={36}><FindIcon /></Picture>查找和选择<Down /></BigButton>
          </Group>
        </Ribbon>

        <FormulaBar>
          <NameArea>
            <Knob />
            <Letter $size={15} $italic>fx</Letter>
          </NameArea>
          <FormulaInput aria-label="编辑栏" defaultValue="0" />
          <ExpandButton aria-label="展开编辑栏">
            <svg width="8" height="6" viewBox="0 0 8 6"><path d="M1 1l3 3 3-3" fill="none" stroke="#44546e" strokeWidth="2" /></svg>
          </ExpandButton>
        </FormulaBar>

        <Workspace>
          <Sheet>
            <Grid>
              <colgroup>
                <Col $w={34} />
                {columns.map((c) => <Col key={c} $w={c === "G" ? 23 : 72} />)}
                <Col />
              </colgroup>
              <thead>
                <tr>
                  <Corner>
                    <svg width="9" height="9" viewBox="0 0 9 9"><path d="M9 0v9H0z" fill="#a9bfdb" /></svg>
                  </Corner>
                  {columns.map((c) => <ColumnHead key={c} scope="col" $hot={c >= "I"}>{c}</ColumnHead>)}
                  <ColumnHead />
                </tr>
              </thead>
              <tbody>
                {Array.from({ length: 18 }, (_, i) => <SheetRow key={i} n={i + 1} />)}
              </tbody>
            </Grid>
            <CopyMarquee viewBox="0 0 362 128" shapeRendering="crispEdges">
              <path d="M.5 1v126M1.500 1v126M360.500 1v126M0 126.500h361" stroke="#ffffff" />
              <path d="M0 1.500h361" stroke="#ded9c5" />
              <path d="M0 1.500h361M360.500 1v126M361 126.500H0M.5 127V1" stroke="#1a1a1a" strokeDasharray="5 3" fill="none" />
            </CopyMarquee>
            <SelectionFrame><FillHandle /></SelectionFrame>
            <Pointer width="36" height="144" viewBox="0 0 36 144">
              <path d="M17.500 4C20 10 23 16 25.500 20c-2 2-4 0-6-1L29.500 133c0 4-4 4-6 2.500-2-2-4-3-6-3s-4 1-6 3c-2 1.500-6 1.500-6-2.500L15.500 19c-2 1-4 3-6 1C12 16 15 10 17.500 4z" fill="#fc2a24" stroke="#ffffff" strokeWidth="1.500" strokeLinejoin="round" />
            </Pointer>
            <PasteOptions><ClipIcon />(Ctrl)<Down color="#1f3864" /></PasteOptions>
          </Sheet>
          <VScroll>
            <SplitBox />
            <ScrollArrow $h={17} aria-label="向上滚动"><Triangle dir="up" /></ScrollArrow>
            <VThumb><GripLines /></VThumb>
            <VTrack />
            <ScrollArrow $h={17} aria-label="向下滚动"><Triangle dir="down" /></ScrollArrow>
          </VScroll>
        </Workspace>

        <BottomRow>
          <SheetNav>
            <NavButton aria-label="第一张工作表"><Triangle dir="left" bar /></NavButton>
            <NavButton aria-label="上一张工作表"><Triangle dir="left" /></NavButton>
            <NavButton aria-label="下一张工作表"><Triangle dir="right" /></NavButton>
            <NavButton aria-label="最后一张工作表"><Triangle dir="right" bar /></NavButton>
          </SheetNav>
          <SheetTab $w={62} $active>Sheet1</SheetTab>
          <SheetTab $w={58}>Sheet2</SheetTab>
          <SheetTab $w={58}>Sheet3</SheetTab>
          <SheetTab $w={32} aria-label="插入工作表"><NewSheetIcon /></SheetTab>
          <HScroll>
            <SplitBox $vertical />
            <ScrollArrow $w={17} $h={15} $boxed aria-label="向左滚动"><Triangle dir="left" /></ScrollArrow>
            <HThumb><GripLines vertical /></HThumb>
            <HTrack />
            <ScrollArrow $w={17} $h={15} $boxed aria-label="向右滚动"><Triangle dir="right" /></ScrollArrow>
            <SplitBox $vertical />
          </HScroll>
          <SizeCorner />
        </BottomRow>

        <StatusBar>
          <span>选定目标区域，然后按 ENTER 或选择 “粘贴”</span>
          <Stats>
            <span>平均值: 0</span>
            <span>计数: 35</span>
            <span>最大值: 3</span>
            <span>求和: 0</span>
          </Stats>
          <IconButton $w={19} $h={18} $on aria-label="普通"><ViewIcon kind="grid" /></IconButton>
          <IconButton $w={19} $h={18} aria-label="页面布局视图"><ViewIcon kind="page" /></IconButton>
          <IconButton $w={19} $h={18} aria-label="分页预览"><ViewIcon kind="break" /></IconButton>
          <ZoomText>100%</ZoomText>
          <RoundButton aria-label="缩小">
            <svg width="8" height="8" viewBox="0 0 8 8"><path d="M0 4h8" stroke="#44546e" strokeWidth="2" /></svg>
          </RoundButton>
          <ZoomSlider type="range" min={0} max={100} defaultValue={50} aria-label="显示比例" />
          <RoundButton aria-label="放大">
            <svg width="8" height="8" viewBox="0 0 8 8"><path d="M0 4h8M4 0v8" stroke="#44546e" strokeWidth="2" /></svg>
          </RoundButton>
          <Grip width="11" height="11" viewBox="0 0 11 11">
            <path d="M8 0h2v2H8zM8 4h2v2H8zM8 8h2v2H8zM4 4h2v2H4zM4 8h2v2H4zM0 8h2v2H0z" fill="#8aa0bf" />
          </Grip>
        </StatusBar>
      </Body>

      <Watermark>
        <WatermarkLogo>
          <Bai>Bai</Bai>
          <svg width="50" height="56" viewBox="0 0 50 56">
            <g fill="#f7f5ee" fillOpacity=".95" stroke="#cfcab4" strokeWidth=".8">
              <ellipse cx="5.500" cy="22" rx="6" ry="8" transform="rotate(-8 5.500 22)" />
              <ellipse cx="17" cy="10" rx="6" ry="8.500" />
              <ellipse cx="32" cy="11" rx="6" ry="8" transform="rotate(10 32 11)" />
              <ellipse cx="41.500" cy="26" rx="6" ry="8" />
              <path d="M23 24c7 0 9 5 13 10 5 5 9 8 8 14-1 6-7 8-12 7-6-1-12-1-18 0-6 1-11-2-11-8 0-6 4-9 8-13 3-5 6-10 12-10z" />
            </g>
            <text x="23.500" y="49" textAnchor="middle" fontFamily="Liberation Sans" fontWeight="700" fontSize="22" fill="#cfc9b2">du</text>
          </svg>
          <JingYan>经验</JingYan>
        </WatermarkLogo>
        <WatermarkUrl>jingyan.baidu.com</WatermarkUrl>
      </Watermark>
    </Window>
  );
}
